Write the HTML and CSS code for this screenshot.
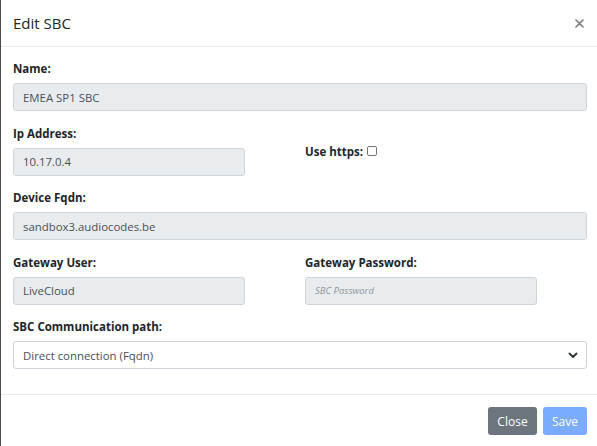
FILE: index.html
```html
<!DOCTYPE html>
<html>
<head>
<meta charset="utf-8">
<link rel="stylesheet" href="styles.css">
</head>
<body>
<div class="modal">
  <div class="modal-header">
    <h5 class="modal-title">Edit SBC</h5>
    <button class="btn-close" aria-label="Close">
      <svg width="9" height="9" viewBox="0 0 9 9"><path d="M1 1L8 8M8 1L1 8" stroke="#7a7a7a" stroke-width="1.6" stroke-linecap="round"/></svg>
    </button>
  </div>
  <div class="modal-body">
    <div class="group">
      <label class="lbl">Name:</label>
      <div class="input full">EMEA SP1 SBC</div>
    </div>
    <div class="row">
      <div class="group">
        <label class="lbl">Ip Address:</label>
        <div class="input half">10.17.0.4</div>
      </div>
      <div class="group shifted">
        <label class="lbl">Use https: <span class="check"></span></label>
      </div>
    </div>
    <div class="group">
      <label class="lbl">Device Fqdn:</label>
      <div class="input full">sandbox3.audiocodes.be</div>
    </div>
    <div class="row">
      <div class="group">
        <label class="lbl">Gateway User:</label>
        <div class="input half">LiveCloud</div>
      </div>
      <div class="group">
        <label class="lbl">Gateway Password:</label>
        <div class="input half placeholder">SBC Password</div>
      </div>
    </div>
    <div class="group last">
      <label class="lbl">SBC Communication path:</label>
      <div class="select full">
        <span>Direct connection (Fqdn)</span>
        <svg width="10" height="7" viewBox="0 0 10 7"><path d="M1.5 1.5L5 5L8.5 1.5" fill="none" stroke="#343a40" stroke-width="2" stroke-linecap="round" stroke-linejoin="round"/></svg>
      </div>
    </div>
  </div>
  <div class="modal-footer">
    <button class="btn btn-secondary">Close</button>
    <button class="btn btn-primary">Save</button>
  </div>
</div>
</body>
</html>
```

FILE: styles.css
```css
html, body {
  margin: 0;
  padding: 0;
  background: #fff;
}
body {
  font-family: "Open Sans", "Noto Sans", sans-serif;
  color: #212529;
  width: 597px;
  height: 446px;
  overflow: hidden;
}
.modal {
  height: 446px;
  border-left: 1px solid #4a4a4a;
  box-sizing: border-box;
  background: #fff;
}
.modal-header {
  height: 46px;
  border-bottom: 1px solid #e9ecef;
  display: flex;
  align-items: center;
  justify-content: space-between;
  padding: 0 13px 0 12px;
}
.modal-title {
  margin: 0;
  font-size: 15px;
  font-weight: 400;
  line-height: 20px;
  color: #212529;
}
.btn-close {
  background: none;
  border: 0;
  padding: 0;
  width: 9px;
  height: 9px;
  display: flex;
}
.modal-body {
  padding: 13px 10px 25px 12px;
}
.group {
  margin-bottom: 13.5px;
}
.group.last {
  margin-bottom: 0;
}
.row {
  display: grid;
  grid-template-columns: 292px 1fr;
}
.shifted {
  padding-top: 18px;
}
.lbl {
  display: block;
  font-weight: 700;
  font-size: 11.5px;
  line-height: 18px;
  margin-bottom: 5px;
  color: #212529;
}
.check {
  display: inline-block;
  width: 8px;
  height: 8px;
  border: 1px solid #767676;
  border-radius: 2px;
  vertical-align: 0px;
  margin-left: 1px;
}
.input, .select {
  box-sizing: border-box;
  height: 28px;
  border: 1px solid #ced4da;
  border-radius: 3px;
  background: #e9ecef;
  font-size: 11.4px;
  color: #495057;
  padding: 0 9px;
  display: flex;
  align-items: center;
}
.full {
  width: 574px;
}
.half {
  width: 232px;
}
.placeholder {
  font-style: italic;
  font-size: 9.5px;
  color: #8f969d;
}
.select {
  background: #fff;
  justify-content: space-between;
  padding-right: 8px;
}
.modal-footer {
  border-top: 1px solid #e9ecef;
  display: flex;
  justify-content: flex-end;
  gap: 6px;
  padding: 12px 10px 0 0;
}
.btn {
  font-family: inherit;
  height: 28px;
  border: 0;
  border-radius: 3px;
  color: #fff;
  font-size: 12px;
  padding: 0 6px;
}
.btn-secondary {
  background: #6c757d;
  width: 49px;
}
.btn-primary {
  background: #7aabfd;
  width: 44px;
}
```
